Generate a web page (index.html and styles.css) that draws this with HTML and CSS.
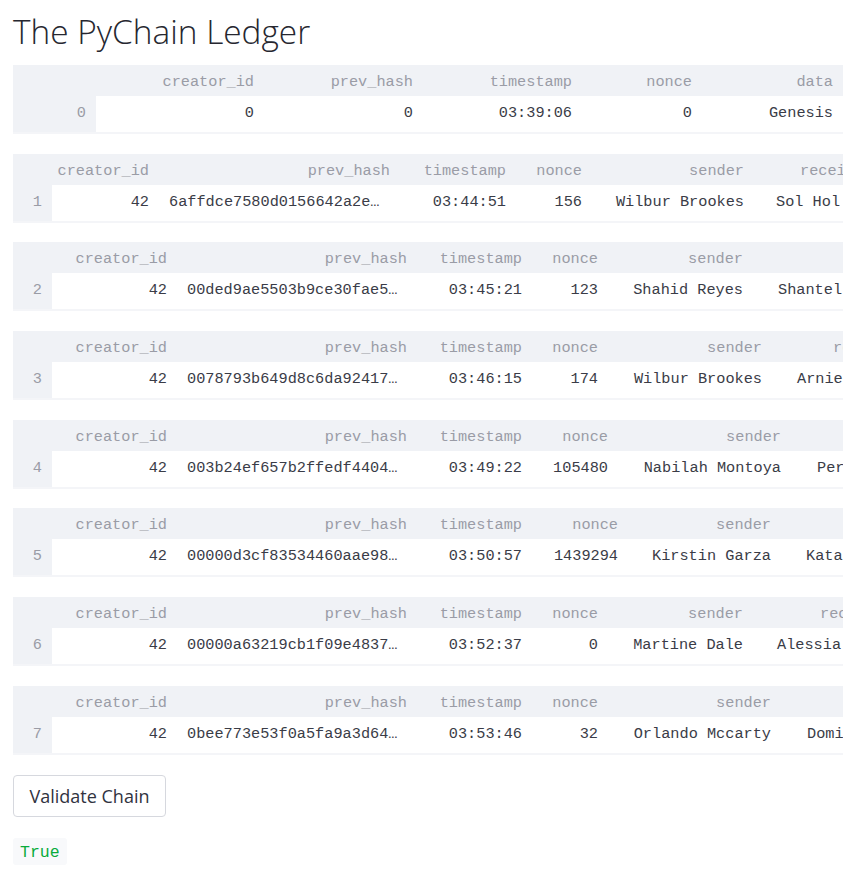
FILE: index.html
```html
<!DOCTYPE html>
<html lang="en">
<head>
<meta charset="utf-8">
<title>The PyChain Ledger</title>
<link rel="stylesheet" href="styles.css">
</head>
<body>
<h1 class="title">The PyChain Ledger</h1>

<div class="tables">
  <div class="df g0">
    <div class="hc"></div><div class="hc">creator_id</div><div class="hc">prev_hash</div><div class="hc">timestamp</div><div class="hc">nonce</div><div class="hc">data</div>
    <div class="ix">0</div><div class="dc">0</div><div class="dc">0</div><div class="dc">03:39:06</div><div class="dc">0</div><div class="dc">Genesis</div>
  </div>

  <div class="df g1">
    <div class="hc"></div><div class="hc">creator_id</div><div class="hc">prev_hash</div><div class="hc">timestamp</div><div class="hc">nonce</div><div class="hc">sender</div><div class="hc last h46">receiver</div>
    <div class="ix">1</div><div class="dc">42</div><div class="dc l">6affdce7580d0156642a2e…</div><div class="dc">03:44:51</div><div class="dc">156</div><div class="dc">Wilbur Brookes</div><div class="dc last v22">Sol Hol</div>
  </div>

  <div class="df g2">
    <div class="hc"></div><div class="hc">creator_id</div><div class="hc">prev_hash</div><div class="hc">timestamp</div><div class="hc">nonce</div><div class="hc">sender</div><div class="hc last h99">receiver</div>
    <div class="ix">2</div><div class="dc">42</div><div class="dc l">00ded9ae5503b9ce30fae5…</div><div class="dc">03:45:21</div><div class="dc">123</div><div class="dc">Shahid Reyes</div><div class="dc last v25">Shantel</div>
  </div>

  <div class="df g3">
    <div class="hc"></div><div class="hc">creator_id</div><div class="hc">prev_hash</div><div class="hc">timestamp</div><div class="hc">nonce</div><div class="hc">sender</div><div class="hc last h61">receiver</div>
    <div class="ix">3</div><div class="dc">42</div><div class="dc l">0078793b649d8c6da92417…</div><div class="dc">03:46:15</div><div class="dc">174</div><div class="dc">Wilbur Brookes</div><div class="dc last v25">Arnie</div>
  </div>

  <div class="df g4">
    <div class="hc"></div><div class="hc">creator_id</div><div class="hc">prev_hash</div><div class="hc">timestamp</div><div class="hc">nonce</div><div class="hc">sender</div><div class="hc last h99">receiver</div>
    <div class="ix">4</div><div class="dc">42</div><div class="dc l">003b24ef657b2ffedf4404…</div><div class="dc">03:49:22</div><div class="dc">105480</div><div class="dc">Nabilah Montoya</div><div class="dc last v26">Per</div>
  </div>

  <div class="df g5">
    <div class="hc"></div><div class="hc">creator_id</div><div class="hc">prev_hash</div><div class="hc">timestamp</div><div class="hc">nonce</div><div class="hc">sender</div><div class="hc last h99">receiver</div>
    <div class="ix">5</div><div class="dc">42</div><div class="dc l">00000d3cf83534460aae98…</div><div class="dc">03:50:57</div><div class="dc">1439294</div><div class="dc">Kirstin Garza</div><div class="dc last v25">Kata</div>
  </div>

  <div class="df g6">
    <div class="hc"></div><div class="hc">creator_id</div><div class="hc">prev_hash</div><div class="hc">timestamp</div><div class="hc">nonce</div><div class="hc">sender</div><div class="hc last h67">receiver</div>
    <div class="ix">6</div><div class="dc">42</div><div class="dc l">00000a63219cb1f09e4837…</div><div class="dc">03:52:37</div><div class="dc">0</div><div class="dc">Martine Dale</div><div class="dc last v24">Alessia</div>
  </div>

  <div class="df g7">
    <div class="hc"></div><div class="hc">creator_id</div><div class="hc">prev_hash</div><div class="hc">timestamp</div><div class="hc">nonce</div><div class="hc">sender</div><div class="hc last h99">receiver</div>
    <div class="ix">7</div><div class="dc">42</div><div class="dc l">0bee773e53f0a5fa9a3d64…</div><div class="dc">03:53:46</div><div class="dc">32</div><div class="dc">Orlando Mccarty</div><div class="dc last v26">Domi</div>
  </div>
</div>

<button class="btn" type="button">Validate Chain</button>

<div class="result"><code class="code">True</code></div>
</body>
</html>
```

FILE: styles.css
```css
* { box-sizing: border-box; }

body {
  margin: 0;
  padding: 12px 13px 0 13px;
  background: #ffffff;
  color: #31333f;
  font-family: "Open Sans", "Noto Sans", sans-serif;
}

.title {
  margin: 0;
  font-size: 33.4px;
  line-height: 38px;
  font-weight: 300;
  color: #262730;
}

.tables {
  display: flex;
  flex-direction: column;
  gap: 19.7px;
  margin-top: 15px;
}

.df {
  display: grid;
  width: 830px;
  overflow: hidden;
  background: #f0f2f6;
  border-bottom: 2px solid #f4f5f8;
  font-family: "Liberation Mono", "DejaVu Sans Mono", monospace;
  font-size: 15.25px;
  white-space: nowrap;
}

.g0 { grid-template-columns: 83px 168px 159px 159px 120px 141px; }
.g1 { grid-template-columns: 39px 107px 241px 116px 76px 162px 1fr; }
.g2 { grid-template-columns: 39px 125px 240px 115px 76px 145px 1fr; }
.g3 { grid-template-columns: 39px 125px 240px 115px 76px 164px 1fr; }
.g4 { grid-template-columns: 39px 125px 240px 115px 86px 173px 1fr; }
.g5 { grid-template-columns: 39px 125px 240px 115px 96px 153px 1fr; }
.g6 { grid-template-columns: 39px 125px 240px 115px 76px 145px 1fr; }
.g7 { grid-template-columns: 39px 125px 240px 115px 76px 173px 1fr; }

.hc {
  height: 31px;
  line-height: 28px;
  padding: 3px 10px 0 0;
  text-align: right;
  color: #9a9ca6;
  overflow: hidden;
}

.ix {
  height: 36px;
  line-height: 34px;
  padding: 0 10px 2px 10px;
  text-align: right;
  color: #9a9ca6;
}

.dc {
  height: 36px;
  line-height: 34px;
  padding: 0 10px 2px 10px;
  text-align: right;
  background: #ffffff;
  color: #3a3c47;
  overflow: hidden;
}

.l { text-align: left; }

.last {
  text-align: left;
  padding-right: 0;
  overflow: hidden;
}

.h46 { padding-left: 46px; }
.h61 { padding-left: 61px; }
.h67 { padding-left: 67px; }
.h99 { padding-left: 99px; }
.v22 { padding-left: 22px; }
.v24 { padding-left: 24px; }
.v25 { padding-left: 25px; }
.v26 { padding-left: 26px; }

.btn {
  display: block;
  margin-top: 20px;
  width: 153px;
  height: 42px;
  padding: 0;
  border: 1px solid #d6d8de;
  border-radius: 4px;
  background: #ffffff;
  color: #31333f;
  font-family: "Open Sans", "Noto Sans", sans-serif;
  font-size: 18px;
  line-height: 40px;
}

.result {
  margin-top: 21px;
}

.code {
  display: inline-block;
  height: 27px;
  padding: 2px 7px 0 7px;
  background: #f8f9fb;
  color: #09ab3b;
  font-family: "Liberation Mono", "DejaVu Sans Mono", monospace;
  font-size: 16.5px;
  line-height: 25px;
  border-radius: 3px;
}
```
